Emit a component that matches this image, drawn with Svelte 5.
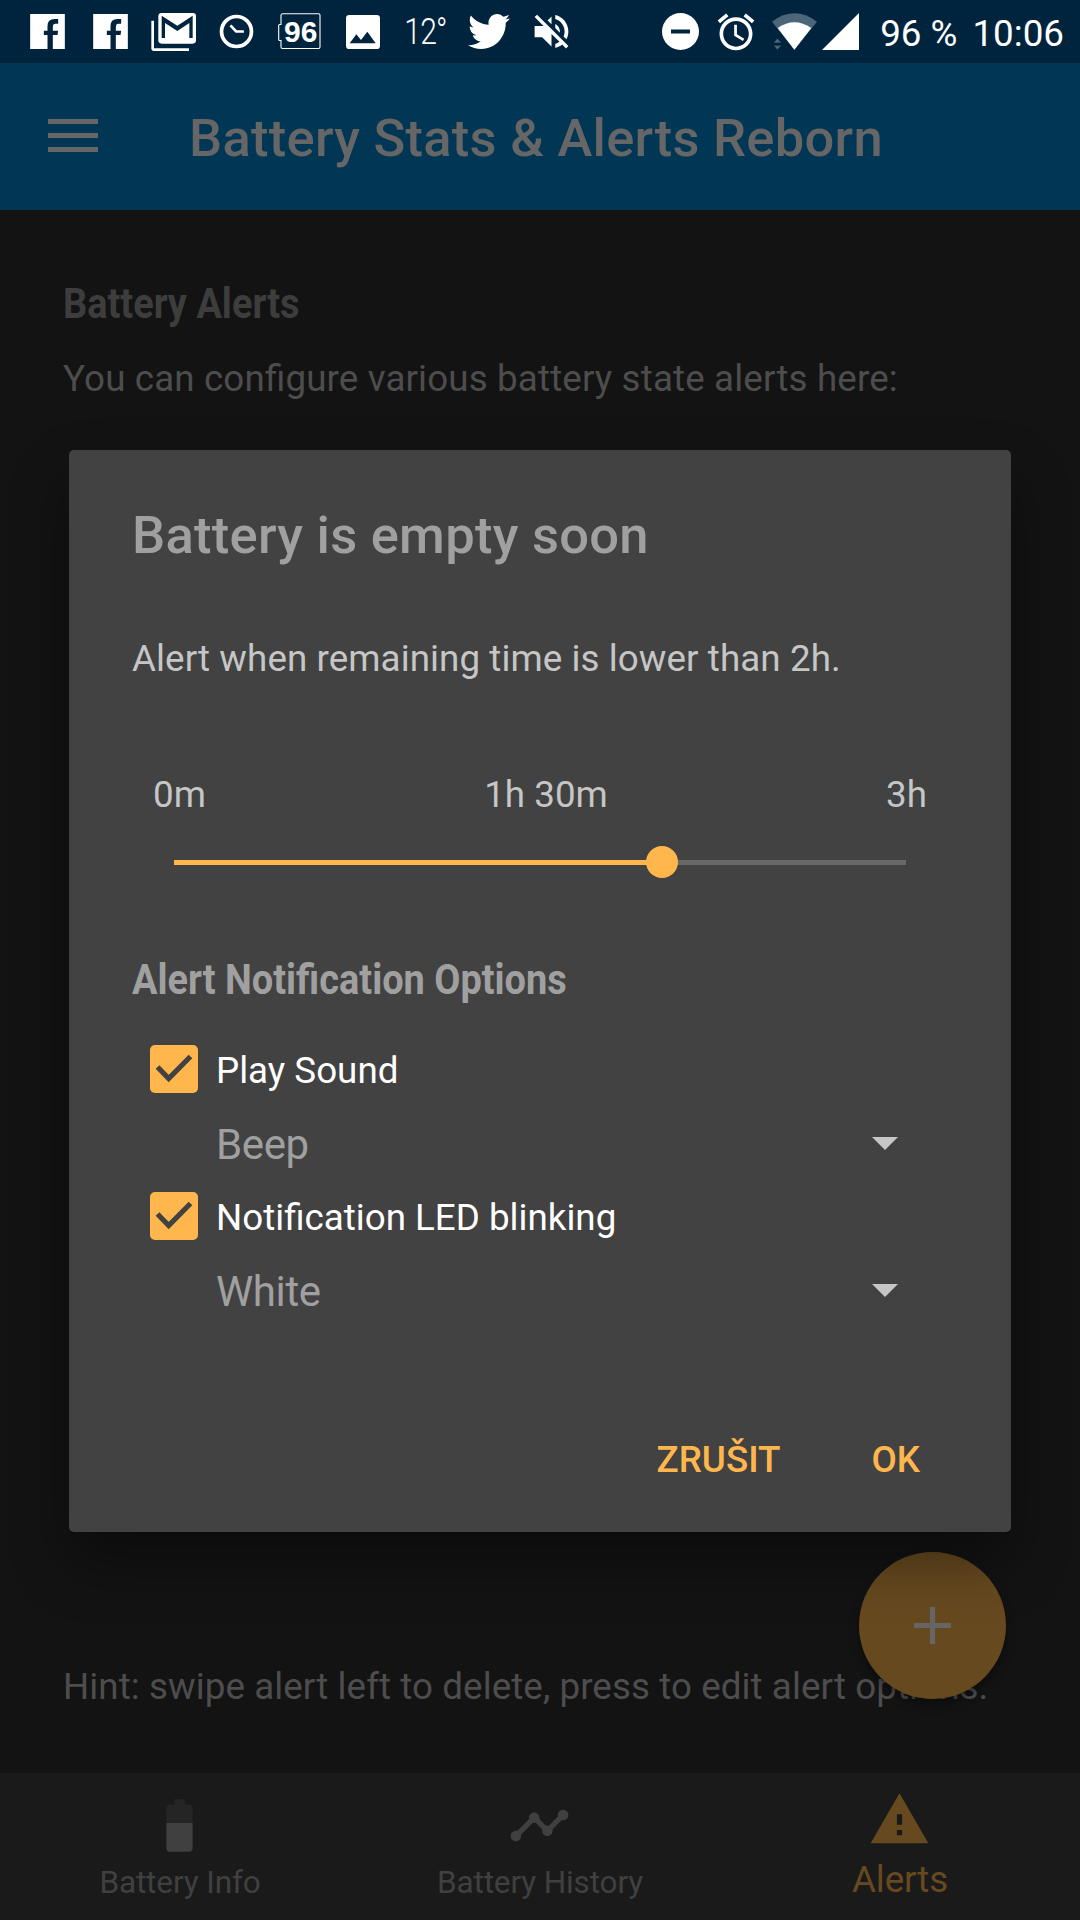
<script lang="ts">
	let value = 120;
	const max = 180;

	const options = [
		{ label: 'Play Sound', choice: 'Beep' },
		{ label: 'Notification LED blinking', choice: 'White' }
	];

	$: percent = (value / max) * 100;
</script>

<div class="screen">
	<div class="status">
		<div class="notifications">
			{#each [0, 1] as _}
				<span>
					<svg width="35" height="35" viewBox="0 0 104 105">
						<path
							d="M0 0H104V105H68V63H82L84 50H68V39Q68 29 76 29H84V15H73Q52 15 52 36V50H41V63H52V105H0Z"
						/>
					</svg>
				</span>
			{/each}
			<span>
				<svg width="45" height="38" viewBox="0 0 135 114">
					<path d="M1 23H9V106H114V114H9Q1 114 1 106Z" />
					<rect x="22" y="0" width="113" height="92" rx="10" />
					<path d="M32 75V8L79 38L125 8V75H115V30L79 54L42 30V75Z" class="cut" />
				</svg>
			</span>
			<span>
				<svg width="35" height="35" viewBox="0 0 104 104">
					<circle cx="52" cy="52" r="44.5" class="line" stroke-width="11" />
					<path d="M34 34L51 52H74" class="line" stroke-width="8" />
				</svg>
			</span>
			<span>
				<svg width="44" height="37" viewBox="0 0 44 37">
					<path
						d="M5 0.8H40.5Q42 0.8 42 2.3V34Q42 35.5 40.5 35.5H4.5Q3 35.5 3 34V27.5H1.5Q0.7 27.5 0.7 26.5V12.5Q0.7 11.5 1.5 11.5H3V2.3Q3 0.8 5 0.8Z"
						class="line"
						stroke-width="1.1"
					/>
					<text x="6" y="28.6" class="level">96</text>
				</svg>
			</span>
			<span>
				<svg width="34" height="34" viewBox="0 0 102 102">
					<rect width="102" height="102" rx="10" />
					<path d="M11 85L31 58L45 75L64 50L89 85Z" class="cut" />
				</svg>
			</span>
			<span class="temperature">12°</span>
			<span>
				<svg width="42" height="35" viewBox="0 48 512 416" preserveAspectRatio="none">
					<path
						d="M459.37 151.716c.325 4.548.325 9.097.325 13.645 0 138.72-105.583 298.558-298.558 298.558-59.452 0-114.68-17.219-161.137-47.106 8.447.974 16.568 1.299 25.34 1.299 49.055 0 94.213-16.568 130.274-44.832-46.132-.975-84.792-31.188-98.112-72.772 6.498.974 12.995 1.624 19.818 1.624 9.421 0 18.843-1.3 27.614-3.573-48.081-9.747-84.143-51.98-84.143-102.985v-1.299c13.969 7.797 30.214 12.67 47.431 13.319-28.264-18.843-46.781-51.005-46.781-87.391 0-19.492 5.197-37.36 14.294-52.954 51.655 63.675 129.3 105.258 216.365 109.807-1.624-7.797-2.599-15.918-2.599-24.04 0-57.828 46.782-104.934 104.934-104.934 30.213 0 57.502 12.67 76.67 33.137 23.715-4.548 46.456-13.32 66.599-25.34-7.798 24.366-24.366 44.833-46.132 57.827 21.117-2.273 41.584-8.122 60.426-16.243-14.292 20.791-32.161 39.308-52.628 54.253z"
					/>
				</svg>
			</span>
			<span>
				<svg width="45" height="45" viewBox="0 0 24 24">
					<path
						d="M16.5 12c0-1.77-1.02-3.29-2.5-4.03v2.21l2.45 2.45c.03-.2.05-.41.05-.63zm2.5 0c0 .94-.2 1.82-.54 2.64l1.51 1.51C20.63 14.91 21 13.5 21 12c0-4.28-2.99-7.86-7-8.77v2.06c2.89.86 5 3.54 5 6.71zM4.27 3L3 4.27 7.73 9H3v6h4l5 5v-6.73l4.25 4.25c-.67.52-1.42.93-2.25 1.18v2.06c1.38-.31 2.63-.95 3.69-1.81L19.73 21 21 19.73l-9-9L4.27 3zM12 4L9.91 6.09 12 8.18V4z"
					/>
				</svg>
			</span>
		</div>

		<div class="system">
			<svg width="37" height="37" viewBox="0 0 37 37">
				<circle cx="18.5" cy="18.5" r="18.5" />
				<path d="M9 16.5H28V20.5H9Z" class="cut" />
			</svg>
			<svg class="alarm" width="44" height="44" viewBox="0 0 24 24">
				<path
					d="M22 5.72l-4.6-3.86-1.29 1.53 4.6 3.86L22 5.72zM7.88 3.39L6.6 1.86 2 5.71l1.29 1.53 4.59-3.85zM12.5 8H11v6l4.75 2.85.75-1.23-4-2.37V8zM12 4c-4.97 0-9 4.03-9 9s4.02 9 9 9c4.97 0 9-4.03 9-9s-4.03-9-9-9zm0 16c-3.87 0-7-3.13-7-7s3.13-7 7-7 7 3.13 7 7-3.13 7-7 7z"
				/>
			</svg>
			<svg class="wifi" width="45" height="37" viewBox="0 0 135 111">
				<path d="M0 26Q67 -24 135 26L67 110Z" opacity="0.3" />
				<path d="M17 45Q67 11 118 45L67 110Z" />
				<path
					d="M4 90L16 76L29 90ZM4 97H29L16 111Z"
					opacity="0.3"
					stroke="#00233e"
					stroke-width="2"
				/>
			</svg>
			<svg class="signal" width="37" height="37" viewBox="0 0 37 37">
				<path d="M0 37H37V0Z" />
			</svg>
			<span class="percent">96 %</span>
			<span class="clock">10:06</span>
		</div>
	</div>

	<header>
		<div class="menu"><i></i><i></i><i></i></div>
		<h1>Battery Stats &amp; Alerts Reborn</h1>
	</header>

	<main>
		<div>
			<h2><span>Battery Alerts</span></h2>
			<p class="intro">You can configure various battery state alerts here:</p>
		</div>
		<p>Hint: swipe alert left to delete, press to edit alert options.</p>
		<button class="fab" aria-label="Add alert">
			<svg width="37" height="37" viewBox="0 0 37 37">
				<path d="M15.9 0H21.1V15.9H37V21.1H21.1V37H15.9V21.1H0V15.9H15.9Z" />
			</svg>
		</button>
	</main>

	<nav>
		<div class="tab">
			<svg width="63" height="63" viewBox="0 0 24 24">
				<path
					fill-opacity=".3"
					d="M17 5.33C17 4.6 16.4 4 15.67 4H14V2h-4v2H8.33C7.6 4 7 4.6 7 5.33V11h10V5.33z"
				/>
				<path d="M7 11v9.67C7 21.4 7.6 22 8.33 22h7.33c.74 0 1.34-.6 1.34-1.33V11H7z" />
			</svg>
			<span>Battery Info</span>
		</div>
		<div class="tab">
			<svg width="63" height="63" viewBox="0 0 24 24">
				<path
					d="M23 8c0 1.1-.9 2-2 2-.18 0-.35-.02-.51-.07l-3.56 3.55c.05.16.07.34.07.52 0 1.1-.9 2-2 2s-2-.9-2-2c0-.18.02-.36.07-.52l-2.55-2.55c-.16.05-.34.07-.52.07s-.36-.02-.52-.07l-4.55 4.56c.05.16.07.33.07.51 0 1.1-.9 2-2 2s-2-.9-2-2 .9-2 2-2c.18 0 .35.02.51.07l4.56-4.55C8.02 9.36 8 9.18 8 9c0-1.1.9-2 2-2s2 .9 2 2c0 .18-.02.36-.07.52l2.55 2.55c.16-.05.34-.07.52-.07s.36.02.52.07l3.55-3.56C19.02 8.35 19 8.18 19 8c0-1.1.9-2 2-2s2 .9 2 2z"
				/>
			</svg>
			<span>Battery History</span>
		</div>
		<div class="tab active">
			<svg width="63" height="63" viewBox="0 0 24 24">
				<path d="M1 21h22L12 2 1 21zm12-3h-2v-2h2v2zm0-4h-2v-4h2v4z" />
			</svg>
			<span>Alerts</span>
		</div>
	</nav>

	<div class="dialog" role="dialog">
		<h1>Battery is empty soon</h1>
		<p>Alert when remaining time is lower than 2h.</p>

		<div class="scale">
			<span>0m</span>
			<span>1h 30m</span>
			<span>3h</span>
		</div>
		<div class="slider">
			<div class="filled" style="width: {percent}%"></div>
			<div class="thumb"></div>
			<div class="rest"></div>
		</div>

		<h2><span>Alert Notification Options</span></h2>
		<div class="options">
			{#each options as option}
				<div class="check">
					<svg width="48" height="48" viewBox="0 0 48 48">
						<rect width="48" height="48" rx="5" />
						<path d="M7.5 22L18.7 33.5L40.5 11.5" />
					</svg>
					<span>{option.label}</span>
				</div>
				<div class="select">
					<span>{option.choice}</span>
					<svg width="26" height="13" viewBox="0 0 26 13"><path d="M0 0H26L13 13Z" /></svg>
				</div>
			{/each}
		</div>

		<div class="actions">
			<button>ZRUŠIT</button>
			<button>OK</button>
		</div>
	</div>
</div>

<style>
	:global(body) {
		margin: 0;
		background: #131313;
	}

	.screen {
		position: relative;
		display: flex;
		flex-direction: column;
		width: 1080px;
		height: 1920px;
		overflow: hidden;
		background: #131313;
		font-family: Roboto, sans-serif;
		font-size: 36.75px;
		font-feature-settings: 'liga' 1;
		line-height: 44px;
		white-space: nowrap;
	}

	svg {
		display: block;
		flex: none;
	}

	h1,
	h2,
	p {
		margin: 0;
	}

	h1 {
		font-size: 52.5px;
		font-weight: 500;
		line-height: 62px;
		letter-spacing: 0.27px;
	}

	h2 {
		font-size: 42px;
		font-weight: 700;
		line-height: 50px;
	}

	/* condensed headings */
	h2 span {
		display: inline-block;
		transform: scaleX(0.903);
		transform-origin: left;
	}

	p {
		letter-spacing: 0.08px;
	}

	button {
		padding: 0;
		border: 0;
		background: none;
		font: inherit;
		color: inherit;
	}

	.status {
		display: flex;
		justify-content: space-between;
		height: 63px;
		padding: 0 16px 0 16px;
		background: #00233e;
		color: #fff;
		fill: #fff;
	}

	.notifications,
	.system {
		display: flex;
		align-items: center;
	}

	.notifications span {
		display: flex;
		justify-content: center;
		width: 63px;
	}

	.cut {
		fill: #00233e;
	}

	.line {
		fill: none;
		stroke: #fff;
	}

	.level {
		font-family: 'Liberation Sans', sans-serif;
		font-size: 30px;
		font-weight: 700;
	}

	.notifications .temperature {
		font-weight: 300;
		letter-spacing: -1px;
		transform: scaleX(0.82);
	}

	.alarm {
		margin-left: 15px;
	}

	.wifi {
		margin-left: 14px;
	}

	.signal {
		margin-left: 5px;
	}

	.percent {
		margin: 4px 0 0 21px;
	}

	.clock {
		margin: 4px 0 0 15px;
	}

	header {
		display: flex;
		align-items: center;
		height: 147px;
		background: #013654;
		color: #666;
	}

	header h1 {
		padding-top: 3px;
	}

	.menu {
		display: grid;
		gap: 9px;
		width: 50px;
		margin: 0 91px 2px 48px;
	}

	.menu i {
		height: 5px;
		background: #666;
	}

	main {
		position: relative;
		flex: 1;
		display: flex;
		flex-direction: column;
		justify-content: space-between;
		padding: 69px 63px 64px;
		color: #4d4d4d;
	}

	main h2 {
		margin-bottom: 28px;
		color: #3d3d3d;
	}

	.intro {
		letter-spacing: 0.14px;
	}

	.fab {
		position: absolute;
		right: 74px;
		bottom: 74px;
		display: grid;
		place-items: center;
		width: 147px;
		height: 147px;
		border-radius: 50%;
		background: #66491f;
		box-shadow: 0 6px 10px rgba(0, 0, 0, 0.35);
		fill: #666;
	}

	nav {
		display: flex;
		height: 147px;
		background: #1a1a1a;
		color: #404040;
		fill: #404040;
	}

	.tab {
		display: flex;
		flex: 1;
		flex-direction: column;
		align-items: center;
		padding-top: 21px;
		font-size: 31.5px;
		letter-spacing: -0.12px;
	}

	.tab svg {
		margin-right: 2px;
	}

	.tab span {
		margin-top: 4px;
	}

	.active {
		padding-top: 15px;
		font-size: 36.75px;
		color: #66491f;
		fill: #66491f;
	}

	.active span {
		margin-top: 7px;
	}

	.dialog {
		position: absolute;
		top: 450px;
		left: 69px;
		display: flex;
		flex-direction: column;
		box-sizing: border-box;
		width: 942px;
		height: 1082px;
		padding: 54px 63px 50px;
		border-radius: 5px;
		background: #424242;
		box-shadow: 0 30px 56px rgba(0, 0, 0, 0.38);
		color: #c6c6c6;
	}

	.dialog h1,
	.dialog h2 {
		color: #a0a0a0;
	}

	.dialog p {
		margin-top: 71px;
	}

	.scale {
		display: flex;
		justify-content: space-between;
		margin: 92px 21px 0;
	}

	.slider {
		display: flex;
		align-items: center;
		height: 32px;
		margin: 29px 42px 0;
	}

	.filled {
		height: 5px;
		background: #ffb74d;
	}

	.thumb {
		z-index: 1;
		width: 32px;
		height: 32px;
		margin: 0 -16px;
		border-radius: 50%;
		background: #ffb74d;
	}

	.rest {
		flex: 1;
		height: 5px;
		background: #686868;
	}

	.dialog h2 {
		margin-top: 77px;
	}

	.options {
		display: grid;
		grid-auto-rows: 73.5px;
		margin: 27px 42px 0 18px;
	}

	.check,
	.select {
		display: flex;
		align-items: center;
	}

	.check {
		gap: 18px;
		color: #fff;
	}

	.check span,
	.select span {
		padding-top: 4px;
	}

	.select svg {
		margin-top: 2px;
	}

	.check rect {
		fill: #ffb74d;
	}

	.check path {
		fill: none;
		stroke: #424242;
		stroke-width: 5.2;
	}

	.select {
		justify-content: space-between;
		padding: 1px 8px 0 66px;
		font-size: 42px;
		letter-spacing: -0.4px;
		color: #a0a0a0;
		fill: #c6c6c6;
	}

	.actions {
		display: flex;
		justify-content: flex-end;
		gap: 91px;
		margin: auto 28px 0;
		font-weight: 500;
		color: #ffb74d;
	}
</style>
